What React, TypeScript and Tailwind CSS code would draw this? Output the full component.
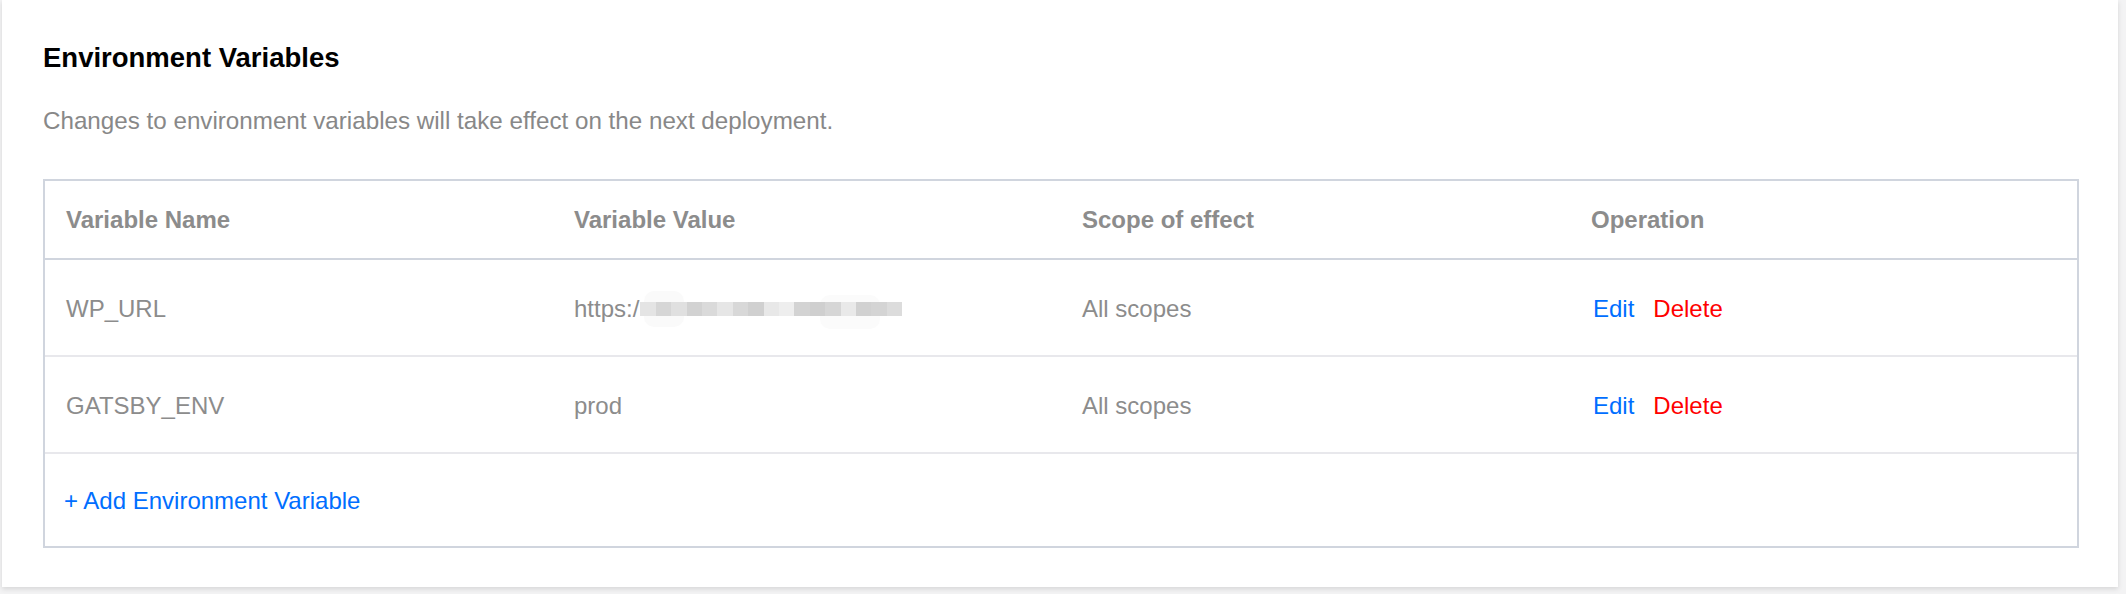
import React from 'react';

const variables = [
  { name: 'WP_URL', value: 'https:/', masked: true, scope: 'All scopes' },
  { name: 'GATSBY_ENV', value: 'prod', masked: false, scope: 'All scopes' },
];

// pixelated blur over the hidden part of the url
const mosaic = [
  '#e4e4e4', '#d6d6d6', '#e0e0e0', '#d2d2d2', '#dadada', '#e6e6e6', '#d8d8d8',
  '#d0d0d0', '#e8e8e8', '#eeeeee', '#d3d3d3', '#cfcfcf', '#d6d6d6', '#e9e9e9',
  '#d1d1d1', '#d4d4d4', '#dcdcdc',
];

function MaskedTail() {
  return (
    <span className="relative ml-[1px] inline-flex h-[40px] w-[262px] items-center">
      <span className="absolute left-[4px] top-[2px] h-[36px] w-[40px] rounded-[10px] bg-[#fafafa]" />
      <span className="absolute left-[180px] top-[6px] h-[34px] w-[60px] rounded-[10px] bg-[#fbfbfb]" />
      <span className="relative flex h-[14px] w-full">
        {mosaic.map((c, i) => (
          <span key={i} className="h-full flex-1" style={{ backgroundColor: c }} />
        ))}
      </span>
    </span>
  );
}

export default function App() {
  return (
    <div
      className="min-h-screen bg-[#f3f3f4] pl-[2px] pr-[8px] pb-[7px]"
      style={{ fontFamily: '"Liberation Sans", Arial, sans-serif' }}
    >
      <div className="bg-white pl-[41px] pr-[39px] pt-[40px] pb-[39px] shadow-[0_2px_5px_rgba(0,0,0,0.12)]">
        {/* Header */}
        <h2 className="text-[27.5px] leading-[36px] font-bold text-black">Environment Variables</h2>
        <p className="mt-[29px] text-[24.2px] leading-[32px] text-[#888888]">
          Changes to environment variables will take effect on the next deployment.
        </p>

        {/* Table */}
        <div className="mt-[42px] border-2 border-[#d0d5de] text-[24px] leading-[32px]">
          <div className="grid h-[79px] grid-cols-4 items-center border-b-2 border-[#d0d5de] font-bold text-[#8c8c8c]">
            <div className="pl-[21px]">Variable Name</div>
            <div className="pl-[21px]">Variable Value</div>
            <div className="pl-[21px]">Scope of effect</div>
            <div className="pl-[22px]">Operation</div>
          </div>

          {variables.map((v) => (
            <div
              key={v.name}
              className="grid h-[97px] grid-cols-4 items-center border-b-2 border-[#e8e8ec] pt-[2px] text-[#8c8c8c]"
            >
              <div className="pl-[21px]">{v.name}</div>
              <div className="flex items-center pl-[21px]">
                {v.value}
                {v.masked && <MaskedTail />}
              </div>
              <div className="pl-[21px]">{v.scope}</div>
              <div className="flex gap-[19px] pl-[24px]">
                <span className="text-[#006eff]">Edit</span>
                <span className="text-[#ff0000]">Delete</span>
              </div>
            </div>
          ))}

          <div className="flex h-[92px] items-center pl-[19px] pt-[2px] text-[#006eff]">+ Add Environment Variable</div>
        </div>
      </div>
    </div>
  );
}
